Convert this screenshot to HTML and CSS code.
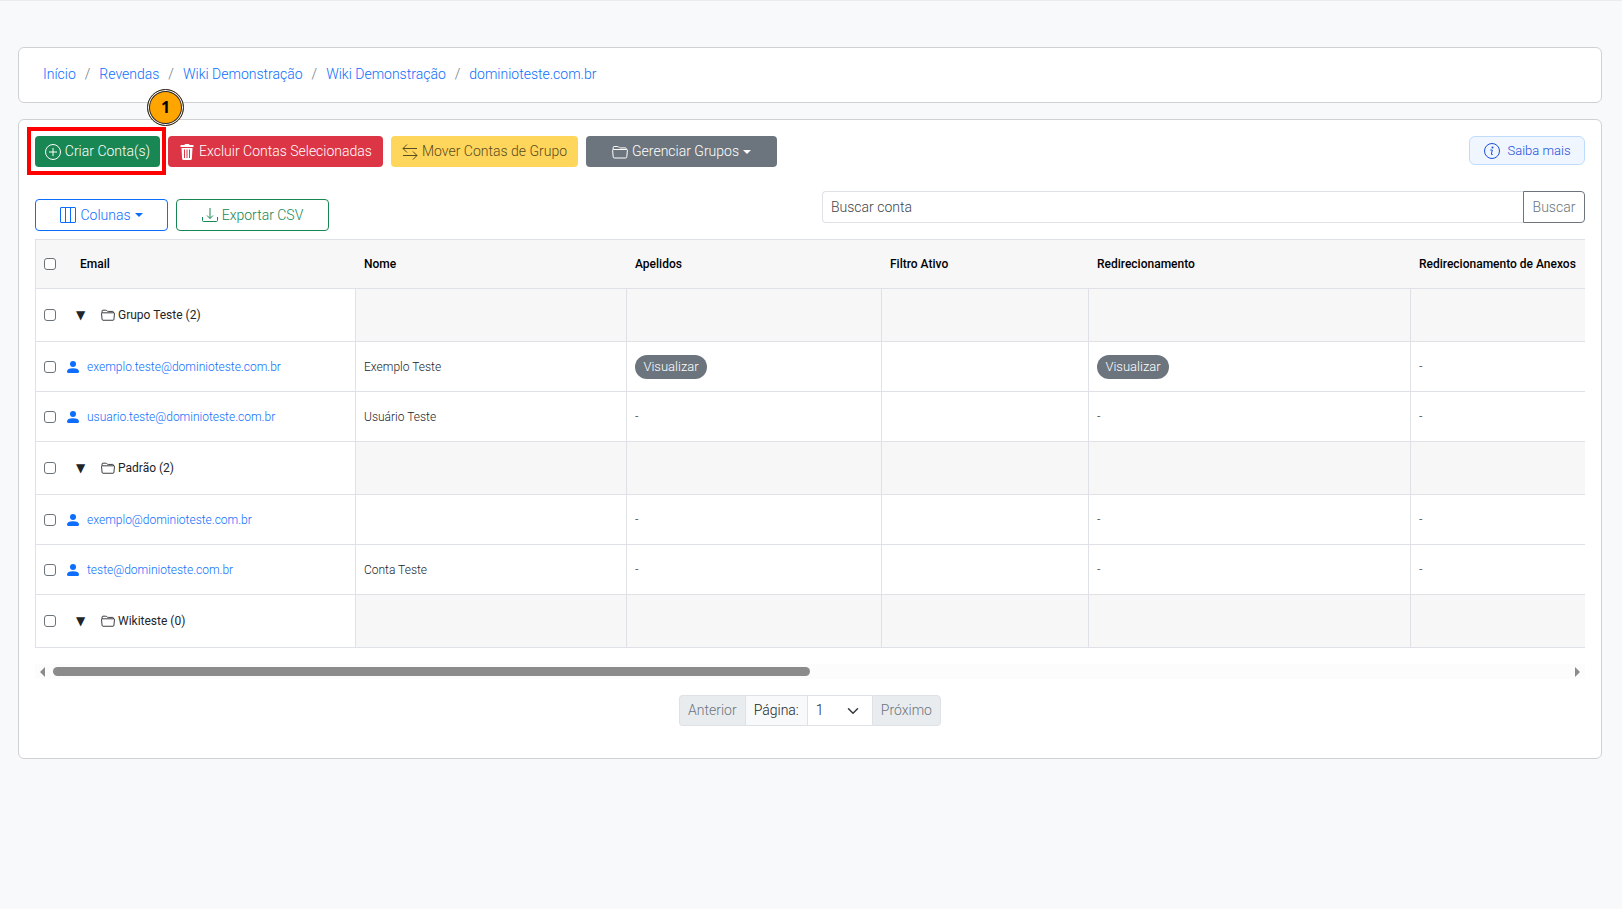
FILE: index.html
```html
<!DOCTYPE html>
<html lang="pt-BR">
<head>
    <meta charset="UTF-8">
    <meta name="viewport" content="width=device-width, initial-scale=1.0">
    <title>Contas - dominioteste.com.br</title>
    <link rel="stylesheet" href="styles.css">
</head>
<body>
    <!-- shared icons -->
    <svg class="sprite" aria-hidden="true">
        <symbol id="folder" viewBox="0 0 16 16">
            <path fill="none" stroke="currentColor" d="M1.2 5.5h13.6q.7 0 .6.7l-.6 6.6q-.1 1.200-1 1.200H2.200q-.9 0-1-1.200L.6 6.200q-.1-.7.6-.7zM1.200 5.500V3.500q0-1 1-1h3.300q.6 0 1 .5l.8.6q.4.3 1 .3h5q1 0 1 1v.6"/>
        </symbol>
        <symbol id="person" viewBox="0 0 16 16">
            <circle cx="8" cy="4" r="4"/>
            <path d="M2 16q-2 0-2-2 0-4.500 8-4.500t8 4.500q0 2-2 2z"/>
        </symbol>
    </svg>

    <main class="page">
        <nav class="card breadcrumb">
            <a href="#">Início</a>
            <span>/</span>
            <a href="#">Revendas</a>
            <span>/</span>
            <a href="#">Wiki Demonstração</a>
            <span>/</span>
            <a href="#">Wiki Demonstração</a>
            <span>/</span>
            <a href="#">dominioteste.com.br</a>
        </nav>

        <section class="card accounts">
            <div class="toolbar">
                <div class="highlight">
                    <button type="button" class="btn btn-success">
                        <svg class="icon" viewBox="0 0 16 16"><circle cx="8" cy="8" r="7.500" fill="none" stroke="currentColor"/><path stroke="currentColor" d="M8 4v8M4 8h8"/></svg>
                        Criar Conta(s)
                    </button>
                    <span class="step">1</span>
                </div>
                <button type="button" class="btn btn-danger">
                    <svg class="icon" viewBox="0 0 16 16"><path fill="currentColor" fill-rule="evenodd" d="M5.500 1q0-1 1-1h3q1 0 1 1H14q.5 0 .5.500V3h-13V1.500q0-.5.5-.5zM2.500 4h11l-.6 10.500q-.1 1.500-1.500 1.500H4.600q-1.400 0-1.500-1.500zM5 5.500v8.500h1V5.500zm2.500 0v8.500h1V5.500zm2.500 0v8.500h1V5.500z"/></svg>
                    Excluir Contas Selecionadas
                </button>
                <button type="button" class="btn btn-warning">
                    <svg class="icon" viewBox="0 0 16 16"><path fill="none" stroke="currentColor" d="M5 .5l-4 4h14M1 4.500l4 4M11 7.500l4 4-4 4M15 11.500H1"/></svg>
                    Mover Contas de Grupo
                </button>
                <button type="button" class="btn btn-secondary">
                    <svg class="icon"><use href="#folder"/></svg>
                    Gerenciar Grupos
                    <i class="caret"></i>
                </button>
                <a href="#" class="help">
                    <svg class="icon" viewBox="0 0 16 16"><circle cx="8" cy="8" r="7.500" fill="none" stroke="currentColor"/><circle cx="8.500" cy="4.500" r="1" fill="currentColor"/><path fill="none" stroke="currentColor" d="M6.300 7h2L7.400 11q-.2 1 1.300.5"/></svg>
                    Saiba mais
                </a>
            </div>

            <div class="filters">
                <div class="filter-buttons">
                    <button type="button" class="btn btn-outline-primary">
                        <svg class="icon" viewBox="0 0 16 16"><path fill="none" stroke="currentColor" d="M1 .5h14q.5 0 .5.500v14q0 .5-.5.500H1q-.5 0-.5-.500V1q0-.5.5-.500zM5.500 .5v15M10.500 .5v15"/></svg>
                        Colunas
                        <i class="caret"></i>
                    </button>
                    <button type="button" class="btn btn-outline-success">
                        <svg class="icon" viewBox="0 0 16 16"><path fill="none" stroke="currentColor" d="M.5 10v3.500q0 1 1 1h13q1 0 1-1V10M8 1v10.500M5 8.500l3 3 3-3"/></svg>
                        Exportar CSV
                    </button>
                </div>
                <form class="search">
                    <input type="text" placeholder="Buscar conta" aria-label="Buscar conta">
                    <button type="button">Buscar</button>
                </form>
            </div>

            <div class="table-wrap">
                <table>
                    <colgroup>
                        <col class="col-email">
                        <col class="col-name">
                        <col class="col-alias">
                        <col class="col-filter">
                        <col class="col-redirect">
                        <col>
                    </colgroup>
                    <thead>
                        <tr>
                            <th><div class="cell"><input type="checkbox" aria-label="Selecionar todas"><span class="head-email">Email</span></div></th>
                            <th>Nome</th>
                            <th>Apelidos</th>
                            <th>Filtro Ativo</th>
                            <th>Redirecionamento</th>
                            <th>Redirecionamento de Anexos</th>
                        </tr>
                    </thead>
                    <tbody>
                        <tr class="group">
                            <td><div class="cell"><input type="checkbox" aria-label="Grupo Teste"><span class="toggle">▼</span><svg class="icon"><use href="#folder"/></svg>Grupo Teste (2)</div></td>
                            <td></td><td></td><td></td><td></td><td></td>
                        </tr>
                        <tr>
                            <td><div class="cell"><input type="checkbox" aria-label="exemplo.teste"><svg class="person"><use href="#person"/></svg><a href="#">exemplo.teste@dominioteste.com.br</a></div></td>
                            <td>Exemplo Teste</td>
                            <td><button type="button" class="pill">Visualizar</button></td>
                            <td></td>
                            <td><button type="button" class="pill">Visualizar</button></td>
                            <td>-</td>
                        </tr>
                        <tr>
                            <td><div class="cell"><input type="checkbox" aria-label="usuario.teste"><svg class="person"><use href="#person"/></svg><a href="#">usuario.teste@dominioteste.com.br</a></div></td>
                            <td>Usuário Teste</td>
                            <td>-</td>
                            <td></td>
                            <td>-</td>
                            <td>-</td>
                        </tr>
                        <tr class="group">
                            <td><div class="cell"><input type="checkbox" aria-label="Padrão"><span class="toggle">▼</span><svg class="icon"><use href="#folder"/></svg>Padrão (2)</div></td>
                            <td></td><td></td><td></td><td></td><td></td>
                        </tr>
                        <tr>
                            <td><div class="cell"><input type="checkbox" aria-label="exemplo"><svg class="person"><use href="#person"/></svg><a href="#">exemplo@dominioteste.com.br</a></div></td>
                            <td></td>
                            <td>-</td>
                            <td></td>
                            <td>-</td>
                            <td>-</td>
                        </tr>
                        <tr>
                            <td><div class="cell"><input type="checkbox" aria-label="teste"><svg class="person"><use href="#person"/></svg><a href="#">teste@dominioteste.com.br</a></div></td>
                            <td>Conta Teste</td>
                            <td>-</td>
                            <td></td>
                            <td>-</td>
                            <td>-</td>
                        </tr>
                        <tr class="group">
                            <td><div class="cell"><input type="checkbox" aria-label="Wikiteste"><span class="toggle">▼</span><svg class="icon"><use href="#folder"/></svg>Wikiteste (0)</div></td>
                            <td></td><td></td><td></td><td></td><td></td>
                        </tr>
                    </tbody>
                </table>
            </div>

            <div class="scrollbar">
                <i class="arrow-left"></i>
                <div class="track"><div class="thumb"></div></div>
                <i class="arrow-right"></i>
            </div>

            <div class="pagination">
                <button type="button" disabled>Anterior</button>
                <label for="page">Página:</label>
                <div class="select">
                    <select id="page"><option>1</option></select>
                    <svg viewBox="0 0 16 16"><path fill="none" stroke="#343a40" stroke-width="2" stroke-linecap="round" stroke-linejoin="round" d="m2 5 6 6 6-6"/></svg>
                </div>
                <button type="button" disabled>Próximo</button>
            </div>
        </section>
    </main>
</body>
</html>
```
FILE: styles.css
```css
* {
    box-sizing: border-box;
}

body {
    margin: 0;
    background: #f8f9fb;
    border-top: 1px solid #ebecee;
    color: #212529;
    font-family: Roboto, "Liberation Sans", sans-serif;
    font-size: 14px;
    font-weight: 300;
    line-height: 21px;
}

a {
    color: #0d6efd;
    text-decoration: none;
}

button, input, select {
    font: inherit;
}

input[type="checkbox"] {
    appearance: none;
    width: 12px;
    height: 12px;
    margin: 0;
    background: #fff;
    border: 1px solid #6b737b;
    border-radius: 3px;
}

.sprite {
    position: absolute;
    width: 0;
    height: 0;
}

.icon {
    width: 16px;
    height: 16px;
    flex: none;
}

.page {
    padding: 46px 20px 0 18px;
}

.card {
    background: #fff;
    border: 1px solid #cfd1d3;
    border-radius: 6px;
    margin-bottom: 16px;
}

.breadcrumb {
    display: flex;
    gap: 9px;
    padding: 16px 24px 17px;
}

.breadcrumb span {
    color: #6c757d;
}

.accounts {
    padding: 16px 16px 32px;
}

.toolbar {
    display: flex;
    gap: 8px;
    align-items: flex-start;
    margin-bottom: 24px;
}

.btn {
    display: flex;
    align-items: center;
    justify-content: center;
    gap: 4px;
    height: 31px;
    padding: 0 8px;
    border: 1px solid transparent;
    border-radius: 4px;
    color: #fff;
    white-space: nowrap;
}

.btn-success {
    min-width: 125px;
    background: #198754;
}

.btn-danger {
    min-width: 215px;
    background: #dc3545;
}

.btn-warning {
    min-width: 187px;
    background: #ffd65c;
    color: #594a20;
}

.btn-secondary {
    min-width: 191px;
    background: #6c757d;
}

.btn-outline-primary {
    min-width: 133px;
    height: 32px;
    background: #fff;
    border-color: #0d6efd;
    color: #0d6efd;
}

.btn-outline-success {
    min-width: 153px;
    height: 32px;
    background: #fff;
    border-color: #198754;
    color: #198754;
}

.caret {
    border: 4px solid transparent;
    border-top-color: currentColor;
    border-bottom: 0;
}

.highlight {
    position: relative;
}

.highlight::before {
    content: "";
    position: absolute;
    inset: -9px -6px -8px -8px;
    border: 4px solid #f00;
}

.step {
    position: absolute;
    top: -47px;
    right: -24px;
    width: 37px;
    height: 37px;
    background: #ffa500;
    border: 1px solid #222;
    border-radius: 50%;
    box-shadow: inset 0 0 0 1px #fff, inset 0 0 0 2px #222;
    color: #000;
    font-family: "Open Sans", sans-serif;
    font-size: 16px;
    font-weight: 700;
    line-height: 35px;
    text-align: center;
}

.help {
    display: flex;
    align-items: center;
    justify-content: center;
    gap: 8px;
    min-width: 116px;
    height: 29px;
    margin-left: auto;
    background: #eff6ff;
    border: 1px solid #bfdbfe;
    border-radius: 6px;
    color: #1d4ed8;
    font-size: 13px;
}

.filters {
    display: flex;
    gap: 24px;
    margin-bottom: 8px;
}

.filter-buttons {
    display: flex;
    flex: 1;
    gap: 8px;
    padding-top: 8px;
}

.search {
    display: flex;
    flex: 1;
}

.search input {
    flex: 1;
    height: 32px;
    padding: 0 8px;
    border: 1px solid #dee2e6;
    border-right: 0;
    border-radius: 4px 0 0 4px;
}

.search input::placeholder {
    color: #40464c;
}

.search button {
    min-width: 62px;
    height: 32px;
    padding: 0 8px;
    background: #fff;
    border: 1px solid #6c757d;
    border-radius: 0 4px 4px 0;
    color: #6c757d;
}

.table-wrap {
    overflow: hidden;
}

table {
    width: 100%;
    table-layout: fixed;
    border-collapse: separate;
    border-spacing: 0;
    border-left: 1px solid #dee2e6;
    border-top: 1px solid #dee2e6;
    font-size: 12px;
    line-height: 18px;
}

.col-email { width: 320px; }
.col-name { width: 271px; }
.col-alias { width: 255px; }
.col-filter { width: 207px; }
.col-redirect { width: 322px; }

th, td {
    height: 50px;
    padding: 0 8px;
    border-bottom: 1px solid #dee2e6;
    text-align: left;
    white-space: nowrap;
}

th {
    height: 49px;
    background: #f7f7f7;
    color: #000;
    font-weight: 500;
}

td {
    border-right: 1px solid #dee2e6;
}

td:last-child {
    border-right: 0;
}

.group td {
    height: 53px;
    background: #f7f7f7;
}

.group td:first-child {
    background: #fff;
    font-weight: 400;
}

.cell {
    display: flex;
    align-items: center;
}

.head-email {
    margin-left: 24px;
}

.toggle {
    width: 17px;
    margin: 0 8px 0 20px;
    font-family: "DejaVu Sans", sans-serif;
    font-size: 12px;
}

.cell .icon {
    width: 14px;
    height: 14px;
    margin-right: 3px;
}

.person {
    width: 12px;
    height: 12px;
    margin: 0 8px 0 11px;
    fill: #0d6efd;
}

.pill {
    min-width: 72px;
    height: 24px;
    padding: 0 8px;
    background: #6c757d;
    border: 0;
    border-radius: 12px;
    color: #fff;
    font-size: 13px;
}

.scrollbar {
    display: flex;
    align-items: center;
    gap: 8px;
    height: 15px;
    margin: 16px 0;
    padding: 0 5px;
    background: #fcfcfc;
}

.track {
    flex: 1;
}

.thumb {
    width: 50%;
    height: 9px;
    background: #8b8b8b;
    border-radius: 5px;
}

.arrow-left, .arrow-right {
    border: 5px solid transparent;
}

.arrow-left {
    border-left: 0;
    border-right-color: #8b8b8b;
}

.arrow-right {
    border-right: 0;
    border-left-color: #8b8b8b;
}

.pagination {
    display: flex;
    justify-content: center;
    height: 31px;
}

.pagination > * {
    padding: 0 8px;
    border: 1px solid #dee2e6;
    border-right-width: 0;
}

.pagination button {
    background: #e9ecef;
    color: #6c757d;
}

.pagination button:first-child {
    border-radius: 4px 0 0 4px;
}

.pagination button:last-child {
    border-right-width: 1px;
    border-radius: 0 4px 4px 0;
}

.pagination label {
    background: #f8f9fa;
    line-height: 28px;
}

.select {
    display: flex;
    align-items: center;
    width: 65px;
    background: #fff;
}

.select select {
    appearance: none;
    flex: 1;
    min-width: 0;
    padding: 0;
    background: none;
    border: 0;
    color: #212529;
}

.select svg {
    width: 12px;
    height: 12px;
    margin-right: 5px;
    pointer-events: none;
}
```
